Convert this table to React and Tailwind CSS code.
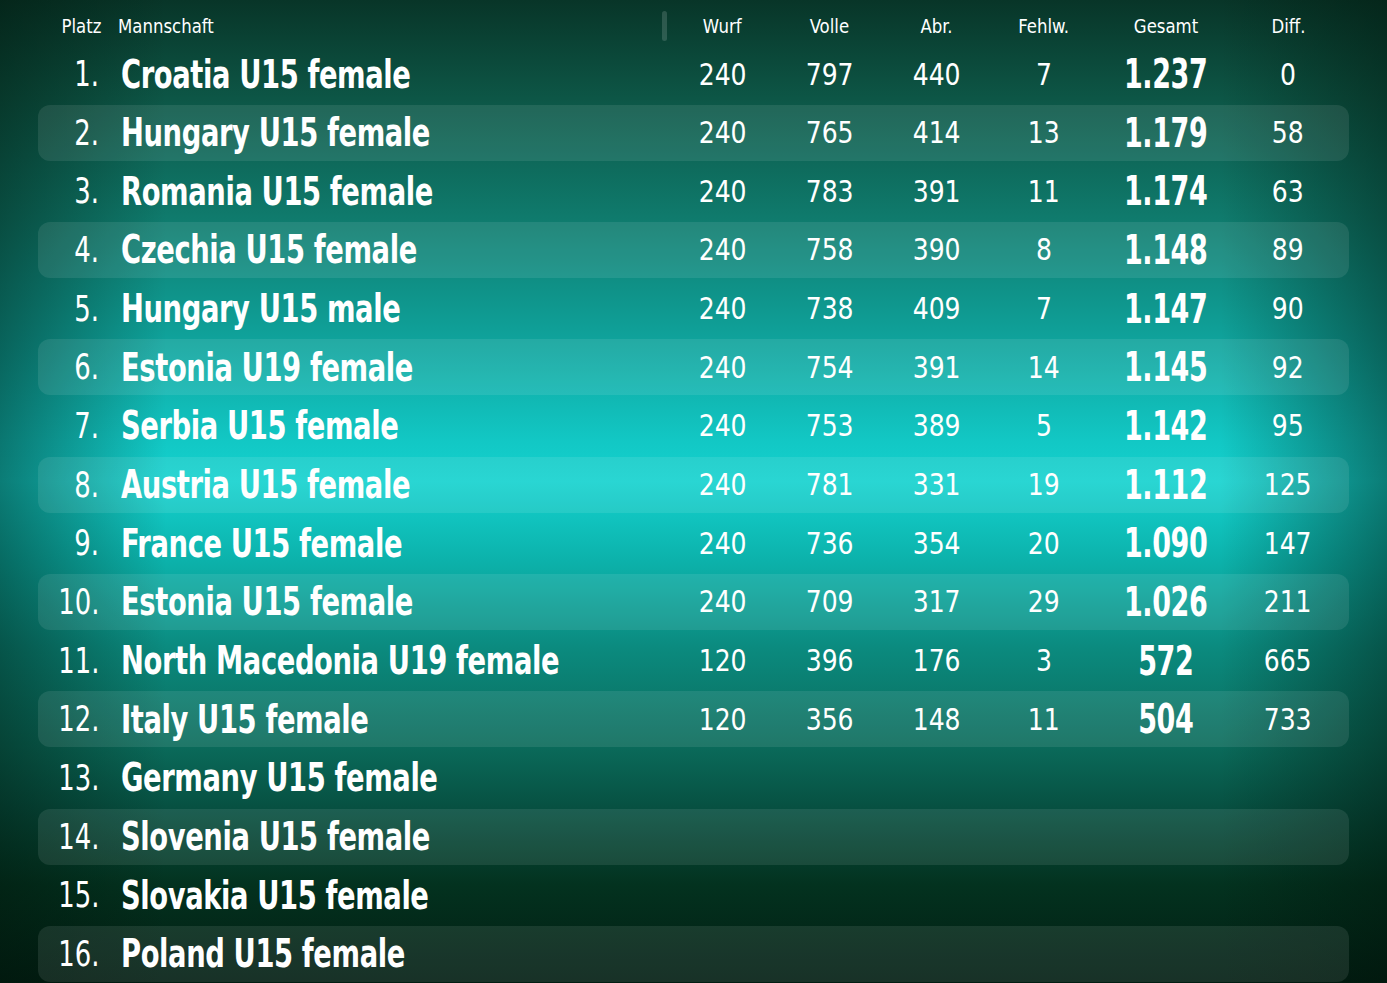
import React from "react";

const rows = [
  ["1.", "Croatia U15 female", "240", "797", "440", "7", "1.237", "0"],
  ["2.", "Hungary U15 female", "240", "765", "414", "13", "1.179", "58"],
  ["3.", "Romania U15 female", "240", "783", "391", "11", "1.174", "63"],
  ["4.", "Czechia U15 female", "240", "758", "390", "8", "1.148", "89"],
  ["5.", "Hungary U15 male", "240", "738", "409", "7", "1.147", "90"],
  ["6.", "Estonia U19 female", "240", "754", "391", "14", "1.145", "92"],
  ["7.", "Serbia U15 female", "240", "753", "389", "5", "1.142", "95"],
  ["8.", "Austria U15 female", "240", "781", "331", "19", "1.112", "125"],
  ["9.", "France U15 female", "240", "736", "354", "20", "1.090", "147"],
  ["10.", "Estonia U15 female", "240", "709", "317", "29", "1.026", "211"],
  ["11.", "North Macedonia U19 female", "120", "396", "176", "3", "572", "665"],
  ["12.", "Italy U15 female", "120", "356", "148", "11", "504", "733"],
  ["13.", "Germany U15 female"],
  ["14.", "Slovenia U15 female"],
  ["15.", "Slovakia U15 female"],
  ["16.", "Poland U15 female"],
];

const font = "font-['Liberation_Sans_Narrow','DejaVu_Sans_Condensed','Roboto_Condensed',sans-serif]";

// the source font is a tight condensed face, so glyphs get squeezed a bit more
function Cell({ w, children, bold }) {
  return (
    <div className={`${w} shrink-0 text-center`}>
      <span
        className={`inline-block ${
          bold
            ? "scale-x-[0.75] text-[40px] font-bold tracking-[-0.5px]"
            : "scale-x-[0.9] text-[31px]"
        }`}
      >
        {children}
      </span>
    </div>
  );
}

export default function App() {
  return (
    <div
      className={`${font} relative h-[983px] w-[1387px] overflow-hidden text-white bg-[linear-gradient(to_right,rgba(0,20,10,0.45),rgba(0,0,0,0)_12%,rgba(0,0,0,0)_88%,rgba(0,20,10,0.45)),linear-gradient(to_bottom,#083528_0%,#0d5646_10%,#0f7a6c_22%,#0fa49d_35%,#12c8c5_45%,#14d2cf_49%,#0cb2ab_57%,#0b8a7e_66%,#0a6a5a_76%,#075142_82%,#03321f_90%,#021d12_100%)]`}
    >
      {/* header */}
      <div className="mx-[38px] flex h-[46px] items-center pt-[6px] text-[20px] leading-none">
        <div className="w-[63px] shrink-0 text-right">
          <span className="inline-block origin-right scale-x-[0.92]">Platz</span>
        </div>
        <div className="flex w-[568px] shrink-0 items-center justify-between pl-[17px]">
          <span className="inline-block origin-left scale-x-[0.92]">Mannschaft</span>
          <span className="mr-[2px] h-[30px] w-[5px] rounded-sm bg-white/15" />
        </div>
        {["Wurf", "Volle", "Abr.", "Fehlw."].map((h) => (
          <div key={h} className="w-[107px] shrink-0 text-center">
            <span className="inline-block scale-x-[0.92]">{h}</span>
          </div>
        ))}
        <div className="w-[138px] shrink-0 text-center">
          <span className="inline-block scale-x-[0.92]">Gesamt</span>
        </div>
        <div className="w-[106px] shrink-0 text-center">
          <span className="inline-block scale-x-[0.92]">Diff.</span>
        </div>
      </div>

      {/* rows */}
      <div className="mx-[38px] flex flex-col gap-[2.67px]">
        {rows.map((r, i) => (
          <div
            key={r[0]}
            className={`flex h-[56px] items-center rounded-[12px] leading-none ${
              i % 2 === 1 ? "bg-white/[0.09]" : ""
            }`}
          >
            <div className="w-[61px] shrink-0 text-right text-[36px]">
              <span className="inline-block origin-right scale-x-[0.8]">{r[0]}</span>
            </div>
            <div className="w-[570px] shrink-0 pl-[22px] text-[39px] font-bold tracking-[-0.5px]">
              <span className="inline-block origin-left scale-x-[0.78] whitespace-nowrap">{r[1]}</span>
            </div>
            <Cell w="w-[107px]">{r[2]}</Cell>
            <Cell w="w-[107px]">{r[3]}</Cell>
            <Cell w="w-[107px]">{r[4]}</Cell>
            <Cell w="w-[107px]">{r[5]}</Cell>
            <Cell w="w-[138px]" bold>
              {r[6]}
            </Cell>
            <Cell w="w-[106px]">{r[7]}</Cell>
          </div>
        ))}
      </div>
    </div>
  );
}
